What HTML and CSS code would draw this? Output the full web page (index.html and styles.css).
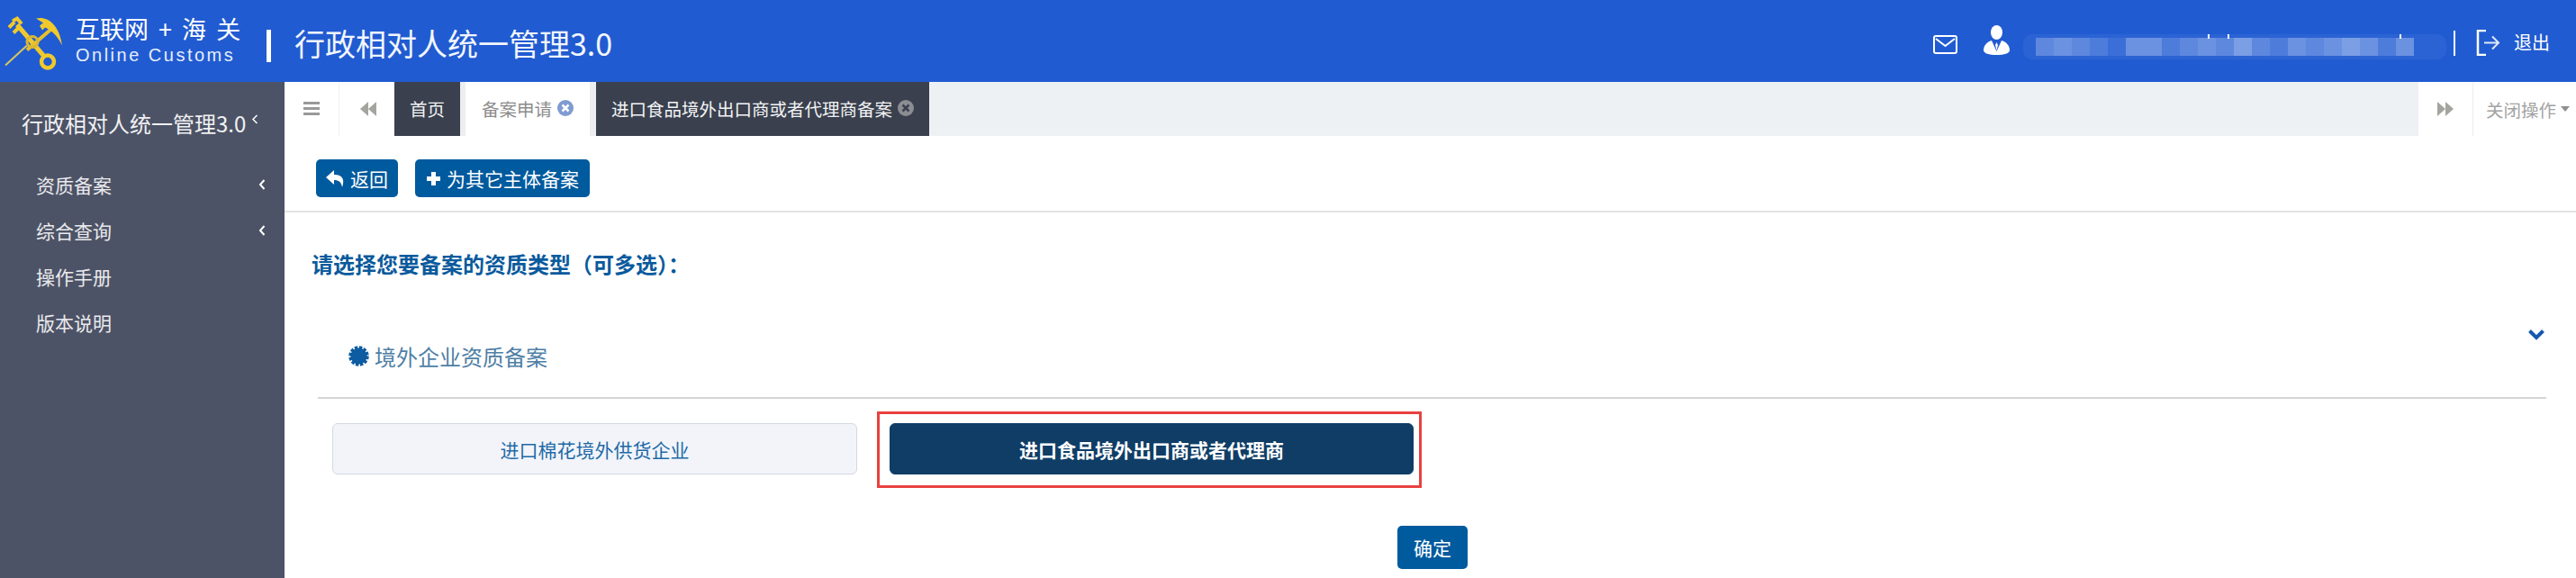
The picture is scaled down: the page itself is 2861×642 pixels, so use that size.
FILE: index.html

```html
<!DOCTYPE html>
<html lang="zh-CN">
<head>
  <meta charset="UTF-8">
  <title>行政相对人统一管理3.0</title>
  <link rel="stylesheet" href="styles.css">
</head>
<body>
  <!-- top bar -->
  <header class="topbar">
    <svg class="logo" viewBox="3 5.500 72 80" aria-hidden="true">
      <!-- staff -->
      <path d="M6 72 L30 50" stroke="#d8c860" stroke-width="2" fill="none"/>
      <!-- key -->
      <path d="M19 27 L49 62" stroke="#f0c92c" stroke-width="5" fill="none"/>
      <circle cx="53" cy="68" r="7" stroke="#f0c92c" stroke-width="4.500" fill="none"/>
      <path d="M10 30 L16 24 M15 36 L22 29 M14 23 L19 20 L24 26" stroke="#f0c92c" stroke-width="4" fill="none"/>
      <!-- anchor -->
      <path d="M30 55 L59 30" stroke="#e6c02e" stroke-width="4" fill="none"/>
      <path d="M40 20 C52 17 66 26 69 50 C63 38 57 33 50 30 L47 33 L44 28 L48 25 Z" fill="#f0c92c"/>
      <circle cx="36" cy="46" r="6" fill="none" stroke="#d9b636" stroke-width="3"/>
    </svg>
    <div class="brand">
      <div class="brand-cn">互联网 + 海 关</div>
      <div class="brand-en">Online Customs</div>
    </div>
    <div class="brand-bar"></div>
    <div class="app-title">行政相对人统一管理3.0</div>

    <div class="top-right">
      <svg class="ico-mail" viewBox="0 0 27 21" aria-hidden="true">
        <rect x="1" y="1" width="25" height="19" rx="2" fill="none" stroke="#fff" stroke-width="2"/>
        <path d="M3 4 L13.500 12 L24 4" fill="none" stroke="#fff" stroke-width="2"/>
      </svg>
      <svg class="ico-user" viewBox="0 0 29 33" aria-hidden="true">
        <ellipse cx="14.500" cy="8" rx="6.500" ry="8" fill="#fff"/>
        <path d="M9 17 C3 19 0 23 0 28 C0 31 6 33 14.500 33 C23 33 29 31 29 28 C29 23 26 19 20 17 L14.500 29 Z" fill="#fff"/>
        <path d="M14.500 19 L13 22 L14.500 28 L16 22 Z" fill="#fff"/>
      </svg>
      <div class="masked">
        <span class="m2"></span><span class="m3"></span><span class="m2"></span><span class="m1"></span><span class="m0"></span><span class="m3"></span><span class="m3"></span><span class="m1"></span><span class="m2"></span><span class="m3"></span><span class="m2"></span><span class="m4"></span><span class="m2"></span><span class="m1"></span><span class="m3"></span><span class="m2"></span><span class="m3"></span><span class="m4"></span><span class="m3"></span><span class="m1"></span><span class="m3"></span>
        <i class="tick tick-a"></i><i class="tick tick-b"></i><i class="tick tick-c"></i>
      </div>
      <div class="top-sep"></div>
      <svg class="ico-exit" viewBox="0 0 28 29" aria-hidden="true">
        <path d="M11 1 H2 V28 H11" fill="none" stroke="#fff" stroke-width="2.500"/>
        <path d="M9 14.500 H25 M18 7.500 L25 14.500 L18 21.500" fill="none" stroke="#dfe8f8" stroke-width="2"/>
      </svg>
      <span class="logout">退出</span>
    </div>
  </header>

  <div class="layout">
    <!-- left menu -->
    <aside class="sidebar">
      <div class="side-title">
        <span>行政相对人统一管理3.0</span>
        <svg class="chev-small" viewBox="0 0 8 11"><path d="M6.500 1 L2 5.500 L6.500 10" fill="none" stroke="#fff" stroke-width="1.500"/></svg>
      </div>
      <ul class="side-menu">
        <li><span>资质备案</span><svg class="chev" viewBox="0 0 8 12"><path d="M6.500 1 L2 6 L6.500 11" fill="none" stroke="#fff" stroke-width="2"/></svg></li>
        <li><span>综合查询</span><svg class="chev" viewBox="0 0 8 12"><path d="M6.500 1 L2 6 L6.500 11" fill="none" stroke="#fff" stroke-width="2"/></svg></li>
        <li><span>操作手册</span></li>
        <li><span>版本说明</span></li>
      </ul>
    </aside>

    <main class="main">
      <!-- tab strip -->
      <nav class="tabs">
        <div class="tab-tool tool-menu">
          <svg viewBox="0 0 18 15" class="ico-bars"><path d="M0 1.500 H18 M0 7.500 H18 M0 13.500 H18" stroke="#999" stroke-width="3"/></svg>
        </div>
        <div class="tab-tool tool-prev">
          <svg viewBox="0 0 18 16" class="ico-arrows"><path d="M9 0 L0 8 L9 16 Z M18 0 L9 8 L18 16 Z" fill="#a5a5a0"/></svg>
        </div>
        <div class="tab tab-dark tab-home">首页</div>
        <div class="tab tab-light">备案申请
          <svg class="ico-close" viewBox="0 0 18 18"><circle cx="9" cy="9" r="9" fill="#7f9bd1"/><path d="M5.500 5.500 L12.500 12.500 M12.500 5.500 L5.500 12.500" stroke="#fff" stroke-width="2.500"/></svg>
        </div>
        <div class="tab tab-dark tab-current">进口食品境外出口商或者代理商备案
          <svg class="ico-close" viewBox="0 0 18 18"><circle cx="9" cy="9" r="9" fill="#8b8d92"/><path d="M5.500 5.500 L12.500 12.500 M12.500 5.500 L5.500 12.500" stroke="#3a404e" stroke-width="2.500"/></svg>
        </div>
        <div class="tab-fill"></div>
        <div class="tab-tool tool-next">
          <svg viewBox="0 0 18 16" class="ico-arrows"><path d="M0 0 L9 8 L0 16 Z M9 0 L18 8 L9 16 Z" fill="#a5a5a0"/></svg>
        </div>
        <div class="tab-close-all">关闭操作<i class="caret"></i></div>
      </nav>

      <div class="toolbar">
        <button class="btn">
          <svg class="ico-reply" viewBox="0 0 21 21"><path d="M9 1 L0 9 L9 17 V12 C14 12 17 14 18 20 C21 12 19 6 9 6 Z" fill="#fff"/></svg>返回
        </button>
        <button class="btn btn-wide">
          <svg class="ico-plus" viewBox="0 0 17 17"><path d="M8.500 1 V16 M1 8.500 H16" stroke="#fff" stroke-width="5"/></svg>为其它主体备案
        </button>
      </div>

      <h2 class="prompt">请选择您要备案的资质类型（可多选）：</h2>

      <div class="section-head">
        <svg class="ico-cert" viewBox="0 0 24 24"><circle cx="12" cy="12" r="9.500" fill="#0d5ba0"/><circle cx="12" cy="12" r="10" fill="none" stroke="#0d5ba0" stroke-width="3.500" stroke-dasharray="3.600 1.640"/></svg>
        <span class="section-name">境外企业资质备案</span>
        <svg class="ico-down" viewBox="0 0 20 13"><path d="M2.500 2.500 L10 10 L17.500 2.500" fill="none" stroke="#1658b0" stroke-width="4"/></svg>
      </div>

      <div class="choices">
        <div class="choice">进口棉花境外供货企业</div>
        <div class="highlight">
          <div class="choice choice-on">进口食品境外出口商或者代理商</div>
        </div>
      </div>

      <div class="actions">
        <button class="btn btn-ok">确定</button>
      </div>
    </main>
  </div>
</body>
</html>
```

FILE: styles.css

```css
* {
  box-sizing: border-box;
}

html, body {
  margin: 0;
  height: 642px;
  overflow: hidden;
}

body {
  font-family: "Noto Sans CJK SC", "Liberation Sans", sans-serif;
  background: #fff;
  color: #333;
}

/* top bar */
.topbar {
  height: 91px;
  background: #215bd1;
  color: #fff;
  display: flex;
  align-items: center;
  position: relative;
}

.logo {
  width: 72px;
  height: 80px;
  margin-left: 3px;
  flex: none;
}

.brand {
  margin-left: 9px;
  width: 180px;
}

.brand-cn {
  font-size: 27px;
  line-height: 34px;
  word-spacing: 5px;
  white-space: nowrap;
  margin-top: -3px;
}

.brand-en {
  font-family: "Liberation Sans", sans-serif;
  font-size: 20px;
  line-height: 24px;
  letter-spacing: 2.500px;
  color: #e6eefb;
  white-space: nowrap;
}

.brand-bar {
  width: 5px;
  height: 36px;
  background: #fff;
  margin-left: 32px;
  margin-top: 10px;
}

.app-title {
  font-size: 34px;
  margin-left: 26px;
  margin-top: 4px;
  line-height: 40px;
  white-space: nowrap;
  color: #f2f6fd;
}

.top-right {
  margin-left: auto;
  display: flex;
  align-items: center;
  height: 100%;
}

.ico-mail {
  width: 27px;
  height: 21px;
  margin-top: 8px;
}

.ico-user {
  width: 29px;
  height: 33px;
  margin-left: 29px;
  margin-top: -2px;
}

.masked {
  position: relative;
  display: flex;
  width: 470px;
  height: 28px;
  margin-left: 15px;
  margin-top: 12px;
  padding: 4px 0 0 14px;
  background: #2b63d4;
  border-radius: 10px;
}

.masked span {
  width: 20px;
  height: 20px;
  background: #fff;
}

.m0 { opacity: 0.08; }
.m1 { opacity: 0.16; }
.m2 { opacity: 0.24; }
.m3 { opacity: 0.3; }
.m4 { opacity: 0.38; }

.tick {
  position: absolute;
  top: 0;
  width: 2px;
  height: 5px;
  background: #fff;
}

.tick-a { left: 205px; }
.tick-b { left: 227px; }
.tick-c { left: 418px; }

.top-sep {
  width: 2px;
  height: 28px;
  background: #fff;
  margin-left: 8px;
  margin-top: 5px;
}

.ico-exit {
  width: 28px;
  height: 29px;
  margin-left: 23px;
  margin-top: 4px;
}

.logout {
  font-size: 20px;
  margin-left: 14px;
  margin-right: 29px;
  margin-top: 1px;
}

/* page body */
.layout {
  display: flex;
  height: 551px;
}

.sidebar {
  width: 316px;
  flex: none;
  background: #4d5366;
  color: #fff;
}

.side-title {
  display: flex;
  align-items: center;
  height: 88px;
  padding: 2px 0 0 24px;
  font-size: 24px;
  color: #f0f1f3;
}

.chev-small {
  width: 8px;
  height: 11px;
  margin-left: 6px;
  margin-top: -8px;
}

.side-menu {
  list-style: none;
  margin: 0;
  padding: 0;
}

.side-menu li {
  display: flex;
  align-items: center;
  justify-content: space-between;
  height: 51px;
  padding: 0 21px 0 40px;
  font-size: 21px;
  color: #e9eaed;
}

.chev {
  width: 8px;
  height: 12px;
}

.main {
  flex: 1;
  min-width: 0;
}

/* tab strip */
.tabs {
  display: flex;
  height: 60px;
  font-size: 19.500px;
}

.tab-tool {
  display: flex;
  align-items: center;
  justify-content: center;
  flex: none;
}

.tool-menu {
  width: 61px;
  border-right: 1px solid #f1f1f1;
  padding-bottom: 2px;
}

.ico-bars {
  width: 18px;
  height: 15px;
}

.tool-prev {
  width: 61px;
  padding-left: 3px;
}

.ico-arrows {
  width: 18px;
  height: 16px;
}

.tab {
  display: flex;
  align-items: center;
  justify-content: center;
  padding-bottom: 2px;
  white-space: nowrap;
  flex: none;
}

.tab-dark {
  background: #3a404e;
  color: #f2f3f4;
}

.tab-home {
  width: 73px;
}

.tab-light {
  width: 151px;
  background: #fff;
  color: #8c8c8c;
  border-left: 6px solid #eceef0;
  border-right: 7px solid #eceef0;
}

.tab-current {
  width: 370px;
}

.ico-close {
  width: 18px;
  height: 18px;
  margin-left: 6px;
}

.tab-fill {
  flex: 1;
  background: #eef1f3;
}

.tool-next {
  width: 61px;
  border-right: 1px solid #ededed;
}

.tab-close-all {
  width: 114px;
  display: flex;
  align-items: center;
  padding-left: 14px;
  color: #a3a3a3;
  white-space: nowrap;
}

.caret {
  width: 0;
  height: 0;
  margin-left: 5px;
  border-left: 5px solid transparent;
  border-right: 5px solid transparent;
  border-top: 6px solid #8f8f8f;
}

/* buttons */
.toolbar {
  display: flex;
  gap: 19px;
  height: 85px;
  padding: 26px 0 0 35px;
  border-bottom: 2px solid #e3e3e3;
}

.btn {
  display: inline-flex;
  align-items: center;
  justify-content: center;
  height: 42px;
  padding: 0 11px;
  border: 0;
  border-radius: 5px;
  background: #005a9e;
  color: #fff;
  font-family: inherit;
  font-size: 21px;
  white-space: nowrap;
}

.btn-wide {
  padding: 0 12px;
}

.ico-reply {
  width: 21px;
  height: 21px;
  margin-right: 6px;
}

.ico-plus {
  width: 17px;
  height: 17px;
  margin-right: 6px;
}

.prompt {
  margin: 39px 0 0 30px;
  font-size: 24px;
  line-height: 36px;
  font-weight: 700;
  color: #0a5a9c;
}

.section-head {
  display: flex;
  align-items: center;
  height: 94px;
  margin: 38px 33px 0 37px;
  padding: 0 1px 0 34px;
  border-bottom: 2px solid #d5d5d5;
}

.ico-cert {
  width: 23px;
  height: 23px;
}

.section-name {
  margin-left: 6px;
  font-size: 24px;
  color: #4f7fa6;
}

.ico-down {
  width: 20px;
  height: 13px;
  margin-left: auto;
  align-self: flex-start;
  margin-top: 16px;
}

.choices {
  display: flex;
  align-items: flex-start;
  gap: 22px;
  margin: 14px 0 0 53px;
}

.choice {
  display: flex;
  align-items: center;
  justify-content: center;
  width: 583px;
  height: 57px;
  margin-top: 13px;
  font-size: 21px;
  color: #1e6aa6;
  background: #f2f4fa;
  border: 1px solid #d4d8e2;
  border-radius: 6px;
}

.highlight {
  width: 605px;
  height: 85px;
  padding: 10px 6px 12px 11px;
  border: 3px solid #e8413f;
}

.choice-on {
  width: 582px;
  margin-top: 0;
  font-weight: 700;
  color: #fff;
  background: #0f3d66;
  border-color: #0f3d66;
}

.actions {
  display: flex;
  justify-content: center;
  margin-top: 42px;
  padding-left: 5px;
}

.btn-ok {
  width: 78px;
  height: 48px;
}
```
